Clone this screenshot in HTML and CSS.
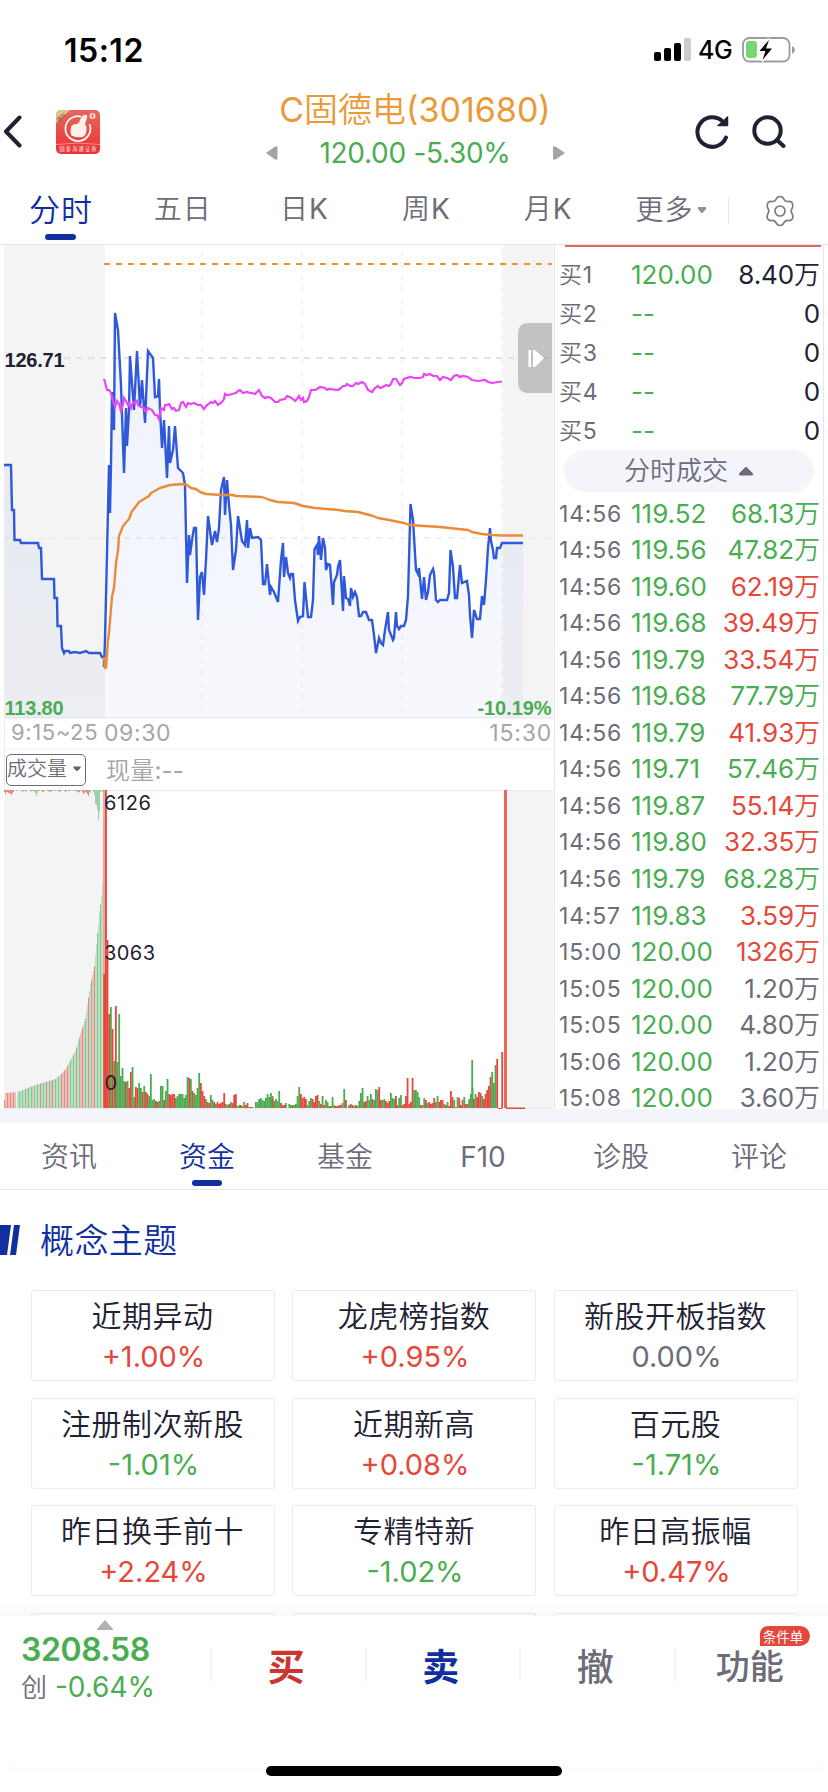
FILE: index.html
```html
<!DOCTYPE html>
<html lang="zh-CN">
<head>
  <meta charset="UTF-8">
  <meta name="viewport" content="width=device-width, initial-scale=1.0">
  <title>C固德电(301680)</title>
  <link rel="stylesheet" href="styles.css">
</head>
<body>
  <!-- Status bar -->
  <div class="status-bar">
    <span class="clock">15:12</span>
    <div class="status-icons">
      <svg width="38" height="24" viewBox="0 0 38 24">
        <rect x="0" y="14" width="7" height="9" rx="2"/>
        <rect x="10" y="10" width="7" height="13" rx="2"/>
        <rect x="20" y="5" width="7" height="18" rx="2"/>
        <rect x="30" y="0" width="7" height="23" rx="2" fill="#ccc"/>
      </svg>
      <span class="network">4G</span>
      <svg width="54" height="28" viewBox="0 0 54 28">
        <rect x="1" y="2" width="46.500" height="23.500" rx="6.500" fill="none" stroke="#9b9b9b" stroke-width="1.800"/>
        <rect x="4" y="5" width="11" height="17" rx="3" fill="#78d672"/>
        <path d="M50 10q3 1.500 3 4t-3 4z" fill="#9b9b9b"/>
        <path d="M27 3L17 15h6l-3 10 11-13h-6z" stroke="#fff" stroke-width="3"/>
        <path d="M27 4L17.500 15h6l-3 9L30 12.500h-6z"/>
      </svg>
    </div>
  </div>

  <!-- Stock title -->
  <header class="header">
    <svg class="back" width="20" height="34" viewBox="0 0 20 34"><path d="M16.500 2.500L3 16.500l13.500 14" fill="none" stroke="#1e2233" stroke-width="4" stroke-linecap="round" stroke-linejoin="round"/></svg>
    <svg class="app-logo" width="44" height="44" viewBox="0 0 44 44">
      <defs>
        <linearGradient id="logoBg" x1="0" y1="0" x2="0" y2="1"><stop offset="0" stop-color="#e4695c"/><stop offset="1" stop-color="#ee2f34"/></linearGradient>
        <clipPath id="logoClip"><rect width="44" height="44" rx="5"/></clipPath>
      </defs>
      <g clip-path="url(#logoClip)">
        <rect width="44" height="44" fill="url(#logoBg)"/>
        <path d="M0 0h14L0 13z" fill="#e3c48a"/>
        <text x="0" y="9" font-size="5" transform="rotate(-40 5 7)" fill="#5b4426">限时</text>
        <path d="M25 6.500A12.500 12.500 0 1 0 33.500 14" fill="none" stroke="#fff" stroke-width="1.700"/>
        <path d="M15 17q1-3 5-3 3 0 4-4 1-4 4-5 4-1 3 3l-2 6q2 2 1.500 6-.5 6-4 7-6 1-10-1-2-1-2-4z" fill="#fdf1e8"/>
        <circle cx="36.500" cy="6" r="3" fill="#f8dcd4"/>
        <path d="M36.500 4v4M35 6h3" stroke="#e4574c" stroke-width=".8"/>
        <path d="M0 34.500q22-3 44 0" fill="none" stroke="#f8a790" stroke-width=".8"/>
        <text x="3.500" y="41.300" font-size="5.200" fill="#fff" textLength="37">国泰海通证券</text>
      </g>
    </svg>
    <div class="stock">
      <h1>C固德电(301680)</h1>
      <div class="quote">
        <svg width="12" height="14" viewBox="0 0 12 14"><path d="M0 7l9-6.500 2.500 0v13h-2.500z" fill="#a3a4aa"/></svg>
        <span>120.00 -5.30%</span>
        <svg width="12" height="14" viewBox="0 0 12 14"><path d="M12 7L2.500.500H0v13h2.500z" fill="#a3a4aa"/></svg>
      </div>
    </div>
    <div class="header-actions">
      <svg width="34" height="36" viewBox="0 0 34 36" fill="none" stroke="#1e2233" stroke-width="4">
        <path d="M31 23.500A14.800 14.800 0 1 1 29 9" stroke-linecap="round"/>
        <path d="M32.500 3v8.500H23l4-3z" fill="#1e2233" stroke-width="1.500" stroke-linejoin="round"/>
      </svg>
      <svg width="34" height="36" viewBox="0 0 34 36" fill="none" stroke="#1e2233" stroke-width="4" stroke-linecap="round">
        <circle cx="15.500" cy="16.500" r="13.200"/>
        <path d="M26 27l5.500 5"/>
      </svg>
    </div>
  </header>

  <!-- Period tabs -->
  <nav class="period-tabs">
    <span class="period active">分时</span>
    <span class="period">五日</span>
    <span class="period">日K</span>
    <span class="period">周K</span>
    <span class="period">月K</span>
    <span class="period more">更多<svg width="10" height="8" viewBox="0 0 10 8"><path d="M1 1h8v2L5.500 7h-1L1 3z" fill="#8e8e93"/></svg></span>
    <span class="settings">
      <svg width="30" height="32" viewBox="0 0 30 32" fill="none" stroke="#7d7d81" stroke-width="1.700" stroke-linejoin="round">
        <path d="M11.500 3.500q1-2 3.500-2t3.500 2q1.500 3.500 5 3 2.500-.3 3.700 1.500 1.300 2.500.3 4.500-2.500 3.500 0 7 1 2-.3 4.500-1.200 1.800-3.700 1.500-3.500-.500-5 3-1 2-3.500 2t-3.500-2q-1.500-3.500-5-3-2.500.3-3.700-1.500-1.300-2.500-.3-4.500 2.500-3.500 0-7-1-2 .3-4.500 1.200-1.800 3.700-1.500 3.500.500 5-3z"/>
        <circle cx="15" cy="16" r="5"/>
      </svg>
    </span>
  </nav>

  <main class="board">
    <!-- Intraday chart -->
    <div class="charts">
      <svg class="price-chart" width="549" height="474" viewBox="4 245 549 474">
        <defs>
          <linearGradient id="area" x1="0" y1="0" x2="0" y2="1"><stop offset="0" stop-color="#3059d9" stop-opacity=".08"/><stop offset="1" stop-color="#3059d9" stop-opacity=".04"/></linearGradient>
        </defs>
        <rect x="4" y="245" width="101" height="474" fill="#f4f4f4"/>
        <rect x="503" y="245" width="50" height="474" fill="#f4f4f4"/>
        <g stroke="#f5f5f7" stroke-width="2" stroke-dasharray="6 6">
          <path d="M202 250v468M302 250v468M402 250v468M502 250v468"/>
          <path d="M4 538H552" stroke="#efeff1"/>
        </g>
        <path d="M64 358H552" stroke="#dde2e6" stroke-width="2" stroke-dasharray="6 6"/>
        <path d="M4 717.500H552" stroke="#ececf0"/>
        <path d="M104 264H552" stroke="#ee9237" stroke-width="2" stroke-dasharray="6 6"/>
        <path id="price-area" fill="url(#area)"/>
        <polyline id="price-line" fill="none" stroke="#3059d9" stroke-width="2.400"/>
        <polyline fill="none" stroke="#e845f5" stroke-width="2.200" points="104,379 106,386 107,390 109,390 111,393 113,401 115,407 117,401 119,404 121,411 123,404 124,398 126,401 128,405 129,403 131,408 133,402 135,403 137,401 138,405 141,407 144,408 145,411 146,412 148,408 152,410 155,415 157,415 159,419 161,408 164,410 165,405 167,405 169,404 172,409 174,408 176,411 179,410 181,403 183,402 186,407 188,403 191,404 194,403 198,405 201,405 204,409 207,405 211,402 213,403 215,401 218,405 222,402 224,399 225,394 227,395 229,395 232,394 236,393 238,391 240,390 243,393 247,392 250,393 252,393 255,394 259,390 262,396 265,398 268,397 271,398 275,402 278,402 280,400 285,399 287,396 290,397 293,399 295,401 297,399 299,396 301,400 303,398 304,402 307,401 309,397 311,390 315,390 317,389 320,387 325,388 327,390 329,389 338,390 341,388 343,386 345,386 347,384 350,386 353,386 356,383 358,384 362,382 365,384 368,390 372,392 375,388 378,386 380,388 383,387 386,385 389,386 391,384 393,379 396,379 400,385 402,383 404,379 410,377 415,378 420,378 423,377 424,374 427,375 430,374 433,376 437,376 440,380 443,377 447,378 451,380 454,376 457,375 460,377 463,376 468,377 472,380 478,381 485,380 488,382 492,383 502,381.500"/>
        <polyline fill="none" stroke="#eb8a38" stroke-width="2.400" stroke-linejoin="round" points="104,657 105,668 106,668 108,640 109,633 112,597 114,588 116,563 118,551 119,536 123,526 129,519 132,511 134,509 139,502 149,496 151,493 160,488 170,485 183,484 187,485 191,488 196,489 200,492 206,494 222,495 232,495 237,496 262,497 270,500 278,502 294,503 303,506 315,508 339,510 344,511 358,512 373,516 378,518 389,520 404,523 409,525 440,527 468,530 472,532 482,534 492,535 502,535.500 523,535.500"/>
        <path d="M518 335q0-12 10-12h24v70h-24q-10 0-10-12z" fill="#c2c2c2"/>
        <path d="M530 358h22" stroke="#b0b5b8" stroke-width="2" stroke-dasharray="6 6"/>
        <path d="M528.500 350h2.500v17h-2.500zM533 350h2l9 8-9 9h-2z" fill="#fff"/>
        <text class="scale" x="4.500" y="367" textLength="60">126.71</text>
        <text class="scale green" x="4.500" y="715" textLength="59">113.80</text>
        <text class="scale green" x="477.500" y="715" textLength="74">-10.19%</text>
      </svg>
      <div class="time-axis">
        <span class="pre">9:15~25</span>
        <span class="open">09:30</span>
        <span class="close">15:30</span>
      </div>
      <div class="indicator">
        <span class="indicator-name">成交量<svg width="8" height="6" viewBox="0 0 8 6"><path d="M.500.500h7V2L4.500 5h-1L.500 2z" fill="#5f616d"/></svg></span>
        <span class="current">现量:--</span>
      </div>
      <svg class="volume-chart" width="549" height="319" viewBox="4 790 549 319">
        <rect x="4" y="790" width="100" height="318" fill="#f4f4f4"/>
        <rect x="506" y="790" width="47" height="319" fill="#f4f4f4"/>
        <path d="M4 790.500H553M4 1108.500H553" stroke="#ebebed"/>
        <g id="volume-bars"></g>
        <text class="volume-label" x="104" y="810" textLength="47">6126</text>
        <text class="volume-label" x="104" y="960" textLength="51">3063</text>
        <text class="volume-label" x="104.500" y="1090">0</text>
      </svg>
    </div>

    <!-- Order book and ticks -->
    <aside class="side">
      <div class="spread-line"></div>
      <ul class="bids">
        <li><span>买1</span><b>120.00</b><i>8.40万</i></li>
        <li><span>买2</span><b>--</b><i>0</i></li>
        <li><span>买3</span><b>--</b><i>0</i></li>
        <li><span>买4</span><b>--</b><i>0</i></li>
        <li><span>买5</span><b>--</b><i>0</i></li>
      </ul>
      <div class="ticks-title">分时成交<svg width="16" height="10" viewBox="0 0 16 10"><path d="M8 1l6.500 6.500V9h-13V7.500z" fill="#6c6d79" stroke="#6c6d79" stroke-linejoin="round"/></svg></div>
      <ul class="ticks">
        <li><span>14:56</span><b>119.52</b><i class="green">68.13万</i></li>
        <li><span>14:56</span><b>119.56</b><i class="green">47.82万</i></li>
        <li><span>14:56</span><b>119.60</b><i class="red">62.19万</i></li>
        <li><span>14:56</span><b>119.68</b><i class="red">39.49万</i></li>
        <li><span>14:56</span><b>119.79</b><i class="red">33.54万</i></li>
        <li><span>14:56</span><b>119.68</b><i class="green">77.79万</i></li>
        <li><span>14:56</span><b>119.79</b><i class="red">41.93万</i></li>
        <li><span>14:56</span><b>119.71</b><i class="green">57.46万</i></li>
        <li><span>14:56</span><b>119.87</b><i class="red">55.14万</i></li>
        <li><span>14:56</span><b>119.80</b><i class="red">32.35万</i></li>
        <li><span>14:56</span><b>119.79</b><i class="green">68.28万</i></li>
        <li><span>14:57</span><b>119.83</b><i class="red">3.59万</i></li>
        <li><span>15:00</span><b>120.00</b><i class="red">1326万</i></li>
        <li><span>15:05</span><b>120.00</b><i>1.20万</i></li>
        <li><span>15:05</span><b>120.00</b><i>4.80万</i></li>
        <li><span>15:06</span><b>120.00</b><i>1.20万</i></li>
        <li><span>15:08</span><b>120.00</b><i>3.60万</i></li>
      </ul>
    </aside>
  </main>

  <!-- Info tabs -->
  <nav class="info-tabs">
    <span>资讯</span>
    <span class="active">资金</span>
    <span>基金</span>
    <span>F10</span>
    <span>诊股</span>
    <span>评论</span>
  </nav>

  <section class="themes">
    <h2><svg width="20" height="30" viewBox="0 0 20 30"><path d="M0 0h11L7 30H0zM14 0h6l-4 30h-6z" fill="#122f9f"/></svg><span>概念主题</span></h2>
    <div class="theme-grid">
      <div class="card"><p>近期异动</p><em class="red">+1.00%</em></div>
      <div class="card"><p>龙虎榜指数</p><em class="red">+0.95%</em></div>
      <div class="card"><p>新股开板指数</p><em>0.00%</em></div>
      <div class="card"><p>注册制次新股</p><em class="green">-1.01%</em></div>
      <div class="card"><p>近期新高</p><em class="red">+0.08%</em></div>
      <div class="card"><p>百元股</p><em class="green">-1.71%</em></div>
      <div class="card"><p>昨日换手前十</p><em class="red">+2.24%</em></div>
      <div class="card"><p>专精特新</p><em class="green">-1.02%</em></div>
      <div class="card"><p>昨日高振幅</p><em class="red">+0.47%</em></div>
      <div class="card"></div>
      <div class="card"></div>
      <div class="card"></div>
    </div>
  </section>

  <!-- Bottom trade bar -->
  <footer class="trade-bar">
    <div class="index">
      <svg width="16" height="10" viewBox="0 0 16 10"><path d="M8 0l8 9v1H0V9z" fill="#b0b0b0"/></svg>
      <strong>3208.58</strong>
      <div><span>创</span> -0.64%</div>
    </div>
    <div class="action buy">买</div>
    <div class="action sell">卖</div>
    <div class="action">撤</div>
    <div class="action func">功能<span class="badge">条件单</span></div>
  </footer>
  <div class="home-indicator"></div>

  <script src="chart.js"></script>
</body>
</html>
```
FILE: styles.css
```css
* {
  box-sizing: border-box;
  margin: 0;
  padding: 0;
}
body {
  width: 828px;
  height: 1792px;
  overflow: hidden;
  background: #fff;
  color: #6c6d79;
  font-family: Inter, "Noto Sans CJK SC DemiLight", "Noto Sans CJK SC", sans-serif;
  font-weight: 400;
  display: flex;
  flex-direction: column;
}
svg {
  display: block;
  flex: none;
}
ul {
  list-style: none;
}
b, i, em {
  font-style: normal;
  font-weight: 400;
}
.red {
  color: #e4483a;
}
.green {
  color: #4aad52;
  fill: #4aad52;
}

/* status bar */
.status-bar {
  height: 90px;
  padding: 10px 32px 0 64px;
  display: flex;
  justify-content: space-between;
  align-items: center;
  color: #000;
  flex: none;
}
.clock {
  font-size: 32px;
  font-weight: 600;
  letter-spacing: 0.5px;
}
.status-icons {
  display: flex;
  align-items: center;
}
.network {
  font-size: 25px;
  font-weight: 500;
  width: 35px;
  margin: 0 9px 0 6px;
  letter-spacing: -0.5px;
}

/* header */
.header {
  height: 90px;
  display: flex;
  align-items: center;
  padding: 0 42px 0 3px;
  flex: none;
}
.app-logo {
  margin: -6px 0 0 33px;
}
.back {
  margin-top: -6px;
}
.stock {
  flex: 1;
  text-align: center;
  padding-left: 35px;
  margin-top: -6px;
}
.stock h1 {
  font-size: 34px;
  font-weight: 400;
  line-height: 42px;
  color: #ea9a36;
}
.quote {
  display: flex;
  justify-content: center;
  align-items: center;
  gap: 42px;
  color: #4aad52;
  font-size: 28px;
  line-height: 44px;
  letter-spacing: -0.3px;
}
.header-actions {
  display: flex;
  gap: 23px;
  margin-top: -6px;
}

/* period tabs */
.period-tabs {
  height: 65px;
  border-bottom: 1px solid #e6e6e8;
  display: flex;
  line-height: 59px;
  font-size: 28px;
  flex: none;
}
.period {
  width: 121.8px;
  text-align: center;
  letter-spacing: 1px;
}
.period.active {
  color: #122f9f;
  font-size: 31px;
  position: relative;
}
.period.active::after {
  content: "";
  position: absolute;
  left: 45px;
  bottom: 4px;
  width: 31px;
  height: 6px;
  border-radius: 3px;
  background: #122f9f;
}
.more {
  display: flex;
  align-items: center;
  justify-content: center;
  gap: 4px;
  width: 119px;
  padding-left: 6px;
  height: 60px;
}
.settings {
  flex: 1;
  height: 27px;
  margin-top: 17px;
  border-left: 1px solid #e6e6e8;
  display: flex;
  align-items: center;
  padding-left: 36px;
}

/* board */
.board {
  height: 864px;
  display: flex;
  flex: none;
  padding-left: 4px;
}
.charts {
  width: 550px;
}
.scale {
  font-family: "Liberation Sans", sans-serif;
  font-weight: 700;
  font-size: 20px;
}
.scale:not(.green) {
  fill: #1e2233;
}
.time-axis {
  height: 31px;
  display: flex;
  color: #a5a5aa;
  font-size: 23px;
  line-height: 28px;
  letter-spacing: 0.6px;
  border-bottom: 2px solid #f5f5f7;
  border-left: 1px solid #ebebed;
}
.pre {
  width: 99px;
  padding-left: 6px;
  font-size: 22px;
  line-height: 26px;
  white-space: nowrap;
}
.open {
  flex: 1;
}
.close {
  padding-right: 2px;
  letter-spacing: 0.8px;
}
.indicator {
  height: 40px;
  display: flex;
  align-items: center;
  border-left: 1px solid #ebebed;
}
.indicator-name {
  display: flex;
  align-items: center;
  justify-content: space-between;
  width: 80px;
  height: 32px;
  margin-left: 1px;
  padding: 0 4px 2px 0;
  border: 1px solid #6c6d79;
  border-radius: 5px;
  font-size: 20px;
  line-height: 30px;
}
.current {
  margin-left: 20px;
  padding-bottom: 3px;
  font-size: 24px;
  letter-spacing: 0.2px;
  color: #a5a5aa;
}
.volume-label {
  font-size: 20px;
  fill: #1e2233;
}

/* order book */
.side {
  width: 270px;
  border-left: 1px solid #e6e6e8;
  border-right: 1px solid #e6e6e8;
}
.spread-line {
  height: 2px;
  margin: 0 2px 0 10px;
  background: #e4685d;
}
.bids {
  height: 202px;
  padding-top: 8px;
}
.side li {
  display: flex;
  align-items: baseline;
  padding: 0 3px 0 4px;
  height: 36.55px;
  line-height: 36.55px;
  white-space: nowrap;
}
.side li span {
  width: 72px;
  font-size: 23px;
  letter-spacing: 0.8px;
  position: relative;
  top: -1px;
}
.side li b {
  flex: 1;
  font-size: 26px;
  color: #4aad52;
}
.side li i {
  font-size: 26px;
  letter-spacing: -0.1px;
}
.side .bids li {
  height: 39px;
  line-height: 39px;
}
.side .bids i {
  color: #1e2233;
}
.ticks-title {
  display: flex;
  align-items: center;
  justify-content: center;
  gap: 10px;
  width: 250px;
  height: 42px;
  margin: 1px 0 3.5px 9px;
  border-radius: 21px;
  background: #f3f5fa;
  font-size: 26px;
  line-height: 42px;
}
.ticks {
  height: 613px;
}

/* info tabs */
.info-tabs {
  height: 81px;
  border-top: 14px solid #f3f5fa;
  border-bottom: 1px solid #e6e6e8;
  display: flex;
  line-height: 68px;
  font-size: 28px;
  flex: none;
}
.info-tabs span {
  flex: 1;
  text-align: center;
}
.info-tabs .active {
  color: #122f9f;
  position: relative;
}
.info-tabs .active::after {
  content: "";
  position: absolute;
  left: 54px;
  bottom: 3px;
  width: 30px;
  height: 6px;
  border-radius: 3px;
  background: #122f9f;
}

/* themes */
.themes {
  height: 426px;
  overflow: hidden;
  flex: none;
}
.themes h2 {
  height: 100px;
  display: flex;
  align-items: center;
  gap: 20px;
  font-size: 34px;
  font-weight: 400;
  letter-spacing: 0.4px;
  color: #122f9f;
}
.themes h2 span {
  padding-bottom: 4px;
}
.theme-grid {
  display: grid;
  grid-template-columns: repeat(3, 244px);
  column-gap: 17.5px;
  row-gap: 16.6px;
  padding-left: 30.500px;
}
.card {
  height: 91px;
  border: 1px solid #ebebed;
  border-radius: 3px;
  text-align: center;
}
.card p {
  font-size: 30px;
  line-height: 38px;
  margin-top: 6px;
  letter-spacing: 0.5px;
  color: #1e2233;
}
.card em {
  display: block;
  font-size: 29px;
  line-height: 43px;
  padding-left: 2px;
}

/* trade bar */
.trade-bar {
  height: 150px;
  display: flex;
  background: #fff;
  box-shadow: 0 -4px 14px rgba(60, 70, 140, 0.05);
  position: relative;
  flex: none;
}
.index {
  width: 210px;
  padding: 4px 0 0 21px;
  color: #4aad52;
}
.index svg {
  margin-left: 76px;
}
.index strong {
  display: block;
  font-size: 32px;
  font-weight: 600;
  line-height: 39px;
  letter-spacing: -0.4px;
}
.index div {
  font-size: 28px;
  line-height: 37px;
}
.index span {
  color: #6c6d79;
  font-size: 26px;
}
.action {
  width: 154.5px;
  height: 33px;
  margin-top: 32px;
  padding-right: 4px;
  border-left: 2px solid #f3f3f8;
  font-family: "Noto Sans CJK SC", sans-serif;
  font-size: 37px;
  font-weight: 500;
  line-height: 34px;
  text-align: center;
}
.buy {
  color: #cb342f;
  font-weight: 700;
}
.sell {
  color: #122f9f;
  font-weight: 700;
}
.func {
  position: relative;
  font-size: 34px;
}
.badge {
  position: absolute;
  left: 84px;
  top: -22px;
  width: 50px;
  height: 20px;
  border-radius: 8px 10px 10px 0;
  background: #e4483a;
  color: #fff;
  font-size: 13.500px;
  font-weight: 400;
  line-height: 20px;
  padding-right: 3px;
}
.home-indicator {
  width: 296px;
  height: 10px;
  margin-left: 266px;
  border-radius: 5px;
  background: #000;
  flex: none;
}
```
FILE: chart.js
```js
const RED = "#e4483a";
const GREEN = "#4aab51";
const BASE = 1108;

// Price line, from the call auction to the close
const price = "4,465 11,465 12,510 14,510 14.500,540 20,540 21,543 38,543 39,548 41,548 42,579 54,579 54.500,598 57,598 57.500,626 61,626 62,648 64,653 65,651 69,651 70,653 75,652 80,653 86,651 89,653 100,653 102,657 104,657 104,667 105,640 107,553 109,465 110,513 111,464 112,392 114,430 115,313 118,330 121,385 124,473 126,408 127,446 129,410 130,356 134,410 137,351 140,407 142,380 145,423 148,351 153,358 155,397 158,396 159,379 160,410 162,448 164,420 167,478 169,426 170,463 173,450 175,426 178,468 183,473 185,485 187,583 189,535 190,555 192,540 194,528 196,528 198,620 200,577 202,572 204,595 206,560 208,516 212,545 215,531 217,542 219,528 221,490 224,477 225,515 227,480 229,505 231,525 233,570 236,550 238,516 242,541 245,545 247,520 248,548 250,528 252,538 258,537 261,540 263,584 265,584 267,564 270,595 271,587 274,592 278,602 281,560 283,543 284,577 286,557 288,573 290,578 291,574 293,574 295,600 298,621 300,617 303,616 304.500,582 308,617 311,617 313,600 314.500,549 317,545 318,555 319,536 321,560 323,538 325,548 326,570 328,564 330,565 333,605 334,582 337,575 338,567 340,560 343,611 344,576 346,598 348,599 350,606 351,588 353,597 355,592 357,597 359,616 361,616 363,612 366,612 369,620 372,620 374,635 376,653 379,638 381,643 383,645 385,630 388,612 389,630 393,640 394,638 396,612 397,626 399,629 401,626 404,626 406,620 408,596 409,560 410.500,504 413,520 416,570 418,574 419,568 422,599 424,577 426,600 428,592 430,575 433,569 434,573 436,600 438,602 440,600 447,600 449,593 450.500,550 453,567 455,598 457,598 460,565 462,583 467,581 469,595 470,615 472,638 474,610 477,619 480,619 482,596 484,605 486,580 488,548 490,528 491,541 493,550 494,558 496,558 497,548 500,548 502,543 523,543";
document.getElementById("price-line").setAttribute("points", price);
document.getElementById("price-area").setAttribute("d", "M" + price.replace(/ /g, "L") + "L523,718L4,718Z");

const group = document.getElementById("volume-bars");

function bar(x, y, w, h, color) {
  const rect = document.createElementNS("http://www.w3.org/2000/svg", "rect");
  rect.setAttribute("x", x);
  rect.setAttribute("y", y);
  rect.setAttribute("width", w);
  rect.setAttribute("height", h);
  rect.setAttribute("fill", color);
  group.appendChild(rect);
}

// Call auction: matched volume, drawn light with a darker stripe every third bar
const auction = [[4, 8], [5, 15], [17, 16], [25, 19], [35, 23], [45, 26], [55, 29], [61, 34], [66, 40], [70, 48], [75, 57], [80, 74], [85, 90], [90, 124], [94, 142], [97, 175], [99, 195], [101, 212], [103, 238], [105, 238]];
const auctionRed = [[4, 16], [27, 28], [32, 33], [40, 41], [46, 47], [50, 53], [61, 69], [76, 77], [80, 84], [88, 90], [92, 95]];
for (let x = 4; x < 103; x++) {
  if (x === 16) continue;
  const i = auction.findIndex(p => p[0] > x);
  const [x0, h0] = auction[i - 1];
  const [x1, h1] = auction[i];
  const h = h0 + (h1 - h0) * (x - x0) / (x1 - x0);
  const red = auctionRed.some(r => x >= r[0] && x < r[1]);
  const dark = x % 3 === 1;
  bar(x, BASE - h, 1, h, red ? (dark ? "#e58c84" : "#f0bcb8") : (dark ? "#82c993" : "#b9e0c3"));
}

// Call auction: unmatched volume, hanging from the top. Negative values are green
const unmatched = [2, 4, 2, 2, 3, 3, 4, 5, 3, 2, 0, 0, -1, -1, 0, 0, 0, -2, -1, -2, 1, 1, -2, 0, 0, 0, -2, 1, 1, -1, -2, -3, -6, -3, -1, 1, 0, -1, -2, 2, -1, 0, 0, 1, -2, 1, 2, 1, -1, -1, 0, 1, -1, 0, 1, 2, -1, 1, 0, 0, 1, 2, -1, -1, 1, -1, 1, 0, -1, 0, -1, 1, -1, 2, -3, 2, 1, 0, 2, 4, -3, 2, 3, 4, 6, 2, -3, 0, -1, -2, -5, -14, -15, -20, -30, -22, -2, -1, -2, -1];
unmatched.forEach((v, i) => bar(4 + i, 790, 1, Math.abs(v), v > 0 ? "#e58c84" : "#9bd3a8"));

// Minute volume, 5/3 px per minute. Negative values are green
const minutes = [
  [103.300, [134, 318, 168, 94, -101, 79, -47, 102, -46, -94, -32, -40, -27, 26, -27, 20, 36, -41, -11, 21, 20, -25, -20, 16, -22, 16, 14, -12, -34, -8, -9, 7, 6, -7, -22, -22, 8, -17, -29, 14, 13, 14, 14, -10, -12, -14, -14, -14, -10, -13, -31, 30, -29, 17, -15, -13, -20, -35, 25, 17, 12, -9, 6, 5, -13, -8, 6, -4, 6, 4, 5, 6, 15, -4, -3, 4, -6, 5, 13, 14, -2, -3, 3, -2, -6, 3, 5, 1, 1, 1, 0, -6, -6, -9, -10, -8, -7, -10, -14, -11, -9, -12]],
  [270, [-15, 10, -7, -9, -7, -17, 5, 3, 3, -5, 0, -4, -3, 3, -3, -4, -12, -21, 14, 10, 11, 9, -3, -7, -10, 9, 6, 12, 13, -7, 4, -12, 3, -8, -6, 2, -2, -11, -3, 2, 2, 3, 3, -5, -19, 8, 0, 3, -4, 3, -2, 3, -2, -7, -15, -20, 6, 7, -12, -8, -14, 9, -8, -19, -18, 21, 8, -8, -9, 7, 5, 7, -15, -10, -9, 12, 3, -10, -13, 3, 4, 12, 30, 4, 6, 30, -18, -18, -16, -11, 3, -3, -10, 8, -5, 6, 4, 5, 10, -6, -12, 6, 8, 8, -4, 3, -6, 2, 17, 11, -8, -1, -11, 10, 3, 8, -11, 4, 4, -9, -14, -20]],
  [471.300, [-48, 9, -14, 11, 16, 15, -12, 9, 14, 18, 22, 31, -36, -25, -43, 49, 0, 0, 56]]
];
for (const [start, values] of minutes) {
  values.forEach((v, i) => {
    const x = start + i * 5 / 3;
    const h = Math.abs(v);
    bar(x, BASE - h, 1.8, h, v > 0 ? RED : GREEN);
  });
}
bar(103, 790, 4, 318, "rgba(228, 72, 58, .45)");
bar(504, 790, 3, 318, "#e9685d");
bar(498, 1108, 4, 1, RED);
bar(506, 1107.500, 19, 1.5, RED);
```
